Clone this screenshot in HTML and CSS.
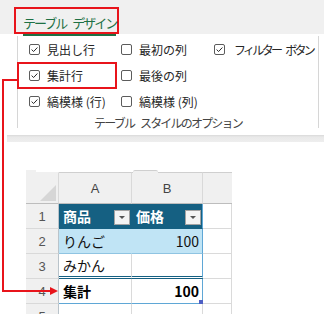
FILE: index.html
```html
<!DOCTYPE html>
<html lang="ja">
<head>
    <meta charset="UTF-8">
    <title>テーブル デザイン</title>
    <link rel="stylesheet" href="styles.css">
</head>
<body>
<div class="tabbar">
    <div class="tab"><span class="tab-label">テーブル デザイン</span></div>
</div>

<div class="ribbon">
    <div class="group">
        <div class="opts">
            <div class="opt"><svg class="box" viewBox="0 0 11 11"><rect x="0.5" y="0.5" width="10" height="10" rx="1.5"/><path d="M2.6 5.6 4.6 7.5 8.4 3.5"/></svg>見出し行</div>
            <div class="opt"><svg class="box" viewBox="0 0 11 11"><rect x="0.5" y="0.5" width="10" height="10" rx="1.5"/></svg>最初の列</div>
            <div class="opt kana"><svg class="box" viewBox="0 0 11 11"><rect x="0.5" y="0.5" width="10" height="10" rx="1.5"/><path d="M2.6 5.6 4.6 7.5 8.4 3.5"/></svg>フィルター ボタン</div>
            <div class="opt"><svg class="box" viewBox="0 0 11 11"><rect x="0.5" y="0.5" width="10" height="10" rx="1.5"/><path d="M2.6 5.6 4.6 7.5 8.4 3.5"/></svg>集計行</div>
            <div class="opt"><svg class="box" viewBox="0 0 11 11"><rect x="0.5" y="0.5" width="10" height="10" rx="1.5"/></svg>最後の列</div>
            <div class="opt"></div>
            <div class="opt"><svg class="box" viewBox="0 0 11 11"><rect x="0.5" y="0.5" width="10" height="10" rx="1.5"/><path d="M2.6 5.6 4.6 7.5 8.4 3.5"/></svg>縞模様 (行)</div>
            <div class="opt"><svg class="box" viewBox="0 0 11 11"><rect x="0.5" y="0.5" width="10" height="10" rx="1.5"/></svg>縞模様 (列)</div>
            <div class="opt"></div>
        </div>
        <div class="group-name">テーブル スタイルのオプション</div>
    </div>
</div>
<div class="strip"></div>

<div class="sheet">
    <div class="bump bump-left"></div>
    <div class="bump bump-mid"></div>

    <div class="corner"></div>
    <div class="colhead">A</div>
    <div class="colhead">B</div>
    <div class="colhead last"></div>

    <div class="rowhead">1</div>
    <div class="cell th a">商品<span class="drop"></span></div>
    <div class="cell th b">価格<span class="drop"></span></div>
    <div class="cell"></div>

    <div class="rowhead">2</div>
    <div class="cell band a">りんご</div>
    <div class="cell band b num">100</div>
    <div class="cell"></div>

    <div class="rowhead">3</div>
    <div class="cell plain a before-total">みかん</div>
    <div class="cell plain b before-total"></div>
    <div class="cell"></div>

    <div class="rowhead">4</div>
    <div class="cell total a">集計</div>
    <div class="cell total b num">100<span class="handle"></span></div>
    <div class="cell"></div>

    <div class="rowhead">5</div>
    <div class="cell"></div>
    <div class="cell"></div>
    <div class="cell"></div>
</div>

<!-- 注釈：赤枠と矢印 -->
<div class="callout"></div>
<svg class="connector" viewBox="0 0 324 314">
    <path d="M17 80 H3 V291 H52"/>
    <polygon points="50,287 58,291 50,295"/>
</svg>
</body>
</html>
```

FILE: styles.css
```css
* { box-sizing: border-box; }
body {
    margin: 0;
    width: 324px;
    height: 314px;
    overflow: hidden;
    position: relative;
    background: #fff;
    font-family: "Noto Sans CJK JP", "Liberation Sans", sans-serif;
    color: #262626;
}

/* リボンのタブ */
.tabbar {
    height: 34px;
    background: #f0f0f0;
    padding: 7px 0 0 14px;
}
.tab {
    width: 105px;
    height: 27px;
    border: 2px solid #e8141b;
    padding-left: 7px;
    white-space: nowrap;
}
.tab-label {
    display: inline-block;
    font-size: 13px;
    line-height: 18px;
    letter-spacing: -2px;
    word-spacing: 5px;
    padding-bottom: 2px;
    color: #1e7145;
    border-bottom: 2px solid #1e7145;
}

/* リボン本体 */
.ribbon {
    height: 101px;
    padding-top: 2px;
}
.group {
    margin-left: 17px;
    width: 302px;
    height: 92px;
    border-left: 1px solid #d6d6d6;
    border-right: 1px solid #d6d6d6;
}
.opts {
    display: grid;
    grid-template-columns: 92px 93px 1fr;
    grid-auto-rows: 26px;
    padding-left: 11px;
}
.opt {
    display: flex;
    align-items: center;
    gap: 7px;
    font-size: 12px;
    white-space: nowrap;
}
.opt.kana { letter-spacing: -2.7px; word-spacing: 5px; }
.opt.kana .box { margin-right: 2px; }
.box {
    width: 11px;
    height: 11px;
    flex: none;
}
.box rect { fill: #fff; stroke: #5c5c5c; }
.box path { fill: none; stroke: #2b2b2b; stroke-width: 1; }
.group-name {
    text-align: center;
    font-size: 12px;
    line-height: 18px;
    letter-spacing: -1.8px;
    word-spacing: 5px;
    color: #444;
}
.strip {
    margin-left: 7px;
    height: 7px;
    background: linear-gradient(#d9d9d9, #e9e9e9 2px, #eeeeee);
}

/* シート */
.sheet {
    margin: 30px 0 0 26px;
    width: 206px;
    display: grid;
    grid-template-columns: 33px 73px 71px 29px;
    grid-template-rows: 32px;
    grid-auto-rows: 25px;
    position: relative;
}
.bump {
    position: absolute;
    top: -2px;
    height: 3px;
    background: #f0f0f0;
    border-top: 1px solid #cfcfcf;
}
.bump-left { left: 0; width: 10px; border-top: none; }
.bump-mid { left: 107px; width: 25px; border-radius: 2px 2px 0 0; }

.corner, .colhead {
    background: #f0f0f0;
    border-top: 1px solid #cfcfcf;
    border-bottom: 1px solid #bdbdbd;
    border-right: 1px solid #d9d9d9;
}
.corner { position: relative; border-top-color: #f0f0f0; }
.corner::after {
    content: "";
    position: absolute;
    right: 2px;
    bottom: 2px;
    width: 16px;
    height: 16px;
    background: #d6d6d6;
    clip-path: polygon(100% 0, 100% 100%, 0 100%);
}
.colhead {
    display: flex;
    align-items: center;
    justify-content: center;
    font-size: 13px;
    color: #444;
    font-family: "Liberation Sans", sans-serif;
    padding-top: 1px;
}
.colhead.last { border-right: none; }

.rowhead {
    background: #f0f0f0;
    border-right: 1px solid #b9c3ca;
    border-bottom: 1px solid #d9d9d9;
    display: flex;
    align-items: center;
    justify-content: center;
    font-size: 13px;
    color: #555;
    font-family: "Liberation Sans", sans-serif;
}

.cell {
    border-right: 1px solid #dadada;
    border-bottom: 1px solid #dadada;
    display: flex;
    align-items: center;
    padding: 0 3px 0 4px;
    font-size: 14px;
    color: #111;
    position: relative;
    white-space: nowrap;
}
.cell.b { border-right-color: #5fa7d6; }
.cell.num { justify-content: flex-end; }

.th {
    background: #156082;
    color: #fff;
    font-weight: bold;
    border-bottom-color: #156082;
}
.th.a { border-right-color: #156082; }
.drop {
    position: absolute;
    right: 1px;
    bottom: 3px;
    width: 16px;
    height: 15px;
    background: #f4f4f4;
    border: 1px solid #a3a3a3;
}
.drop::after {
    content: "";
    position: absolute;
    left: 4px;
    top: 5px;
    border-left: 3px solid transparent;
    border-right: 3px solid transparent;
    border-top: 3px solid #555;
}

.band {
    background: #c0e4f5;
    border-bottom-color: #8fc4e2;
}
.band.a { border-right-color: #c0e4f5; }
.before-total { border-bottom: 3px double #156082; }
.total {
    font-weight: bold;
    color: #000;
    border-bottom-color: #5fa7d6;
}
.handle {
    position: absolute;
    right: -1px;
    bottom: -1px;
    width: 4px;
    height: 4px;
    background: #4d5fc4;
}

/* 注釈 */
.callout {
    position: absolute;
    left: 17px;
    top: 62px;
    width: 100px;
    height: 27px;
    border: 2px solid #e8141b;
}
.connector {
    position: absolute;
    left: 0;
    top: 0;
    width: 324px;
    height: 314px;
    pointer-events: none;
}
.connector path { fill: none; stroke: #e8141b; stroke-width: 2; }
.connector polygon { fill: #e8141b; }
```
